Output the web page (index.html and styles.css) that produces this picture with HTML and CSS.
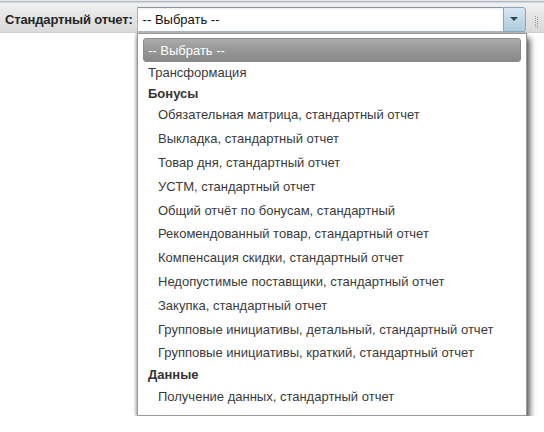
FILE: index.html
```html
<!DOCTYPE html>
<html lang="ru">
<head>
<meta charset="utf-8">
<link rel="stylesheet" href="styles.css">
</head>
<body>
<div class="toolbar">
  <label class="tb-label">Стандартный отчет:</label>
  <div class="combo">
    <div class="combo-input">-- Выбрать --</div>
    <div class="combo-trigger"><span class="arrow"></span></div>
  </div>
  <div class="grip"></div>
</div>
<div class="boundlist">
  <div class="opt opt-sel">-- Выбрать --</div>
  <div class="opt opt-top">Трансформация</div>
  <div class="opt grp">Бонусы</div>
  <div class="opt child">Обязательная матрица, стандартный отчет</div>
  <div class="opt child">Выкладка, стандартный отчет</div>
  <div class="opt child">Товар дня, стандартный отчет</div>
  <div class="opt child">УСТМ, стандартный отчет</div>
  <div class="opt child">Общий отчёт по бонусам, стандартный</div>
  <div class="opt child">Рекомендованный товар, стандартный отчет</div>
  <div class="opt child">Компенсация скидки, стандартный отчет</div>
  <div class="opt child">Недопустимые поставщики, стандартный отчет</div>
  <div class="opt child">Закупка, стандартный отчет</div>
  <div class="opt child">Групповые инициативы, детальный, стандартный отчет</div>
  <div class="opt child">Групповые инициативы, краткий, стандартный отчет</div>
  <div class="opt grp">Данные</div>
  <div class="opt child">Получение данных, стандартный отчет</div>
</div>
</body>
</html>
```

FILE: styles.css
```css
html, body {
  margin: 0;
  padding: 0;
  background: #ffffff;
  font-family: "Liberation Sans", Arial, sans-serif;
  font-size: 13px;
}

.toolbar {
  box-sizing: border-box;
  height: 33px;
  display: flex;
  align-items: flex-start;
  padding: 7px 0 0 5px;
  background: linear-gradient(to bottom, #e4e6e8 0, #e4e6e8 1px, #b3bcc5 1px, #b3bcc5 2px, #f1f1f1 3px, #e2e2e2 60%, #d9d9d9 100%);
  border-bottom: 1px solid #cfcfcf;
}

.tb-label {
  font-weight: bold;
  color: #262626;
  line-height: 25px;
  letter-spacing: -0.15px;
  margin-right: 4px;
}

.combo {
  display: flex;
  height: 25px;
}

.combo-input {
  box-sizing: border-box;
  width: 366px;
  height: 25px;
  padding: 0 5px;
  line-height: 23px;
  color: #111;
  background: #fff;
  border: 1px solid #a8b4c0;
  border-top-color: #8595a5;
  border-right: none;
  box-shadow: inset 0 1px 2px rgba(0, 0, 0, 0.08);
}

.combo-trigger {
  box-sizing: border-box;
  width: 23px;
  height: 25px;
  border: 1px solid #86a7be;
  border-radius: 0 3px 3px 0;
  background: linear-gradient(to bottom, #dbe8f1 0%, #c4d9e7 45%, #adcadd 100%);
  display: flex;
  align-items: center;
  justify-content: center;
}

.arrow {
  width: 0;
  height: 0;
  border-left: 4px solid transparent;
  border-right: 4px solid transparent;
  border-top: 4px solid #2f4858;
  margin-top: -1px;
}

.grip {
  width: 3px;
  height: 12px;
  margin: 9px 0 0 9px;
  background-image:
    repeating-linear-gradient(to bottom, #9a9a9a 0, #9a9a9a 1px, transparent 1px, transparent 2px),
    repeating-linear-gradient(to bottom, #9a9a9a 0, #9a9a9a 1px, transparent 1px, transparent 2px);
  background-size: 1px 100%;
  background-position: 0 0, 2px 1px;
  background-repeat: no-repeat;
}

.boundlist {
  box-sizing: border-box;
  width: 390px;
  margin-left: 137px;
  padding: 4px 5px 6px;
  background: #fff;
  border: 1px solid #9a9a9a;
  box-shadow: -1px 0 3px rgba(0, 0, 0, 0.3), 3px 5px 6px rgba(0, 0, 0, 0.65);
  color: #3a3a3a;
}

.opt {
  box-sizing: border-box;
  display: flex;
  align-items: center;
  padding-left: 5px;
  white-space: nowrap;
}

.opt-sel {
  height: 24px;
  color: #fff;
  background: linear-gradient(to bottom, #acacac 0%, #979797 50%, #8a8a8a 100%);
  border: 1px solid #8a8a8a;
  border-radius: 3px;
  padding-left: 4px;
}

.opt-top {
  height: 21px;
}

.grp {
  height: 20px;
  font-weight: bold;
  color: #333;
}

.child {
  height: 23.8px;
  padding-left: 15px;
}
```
